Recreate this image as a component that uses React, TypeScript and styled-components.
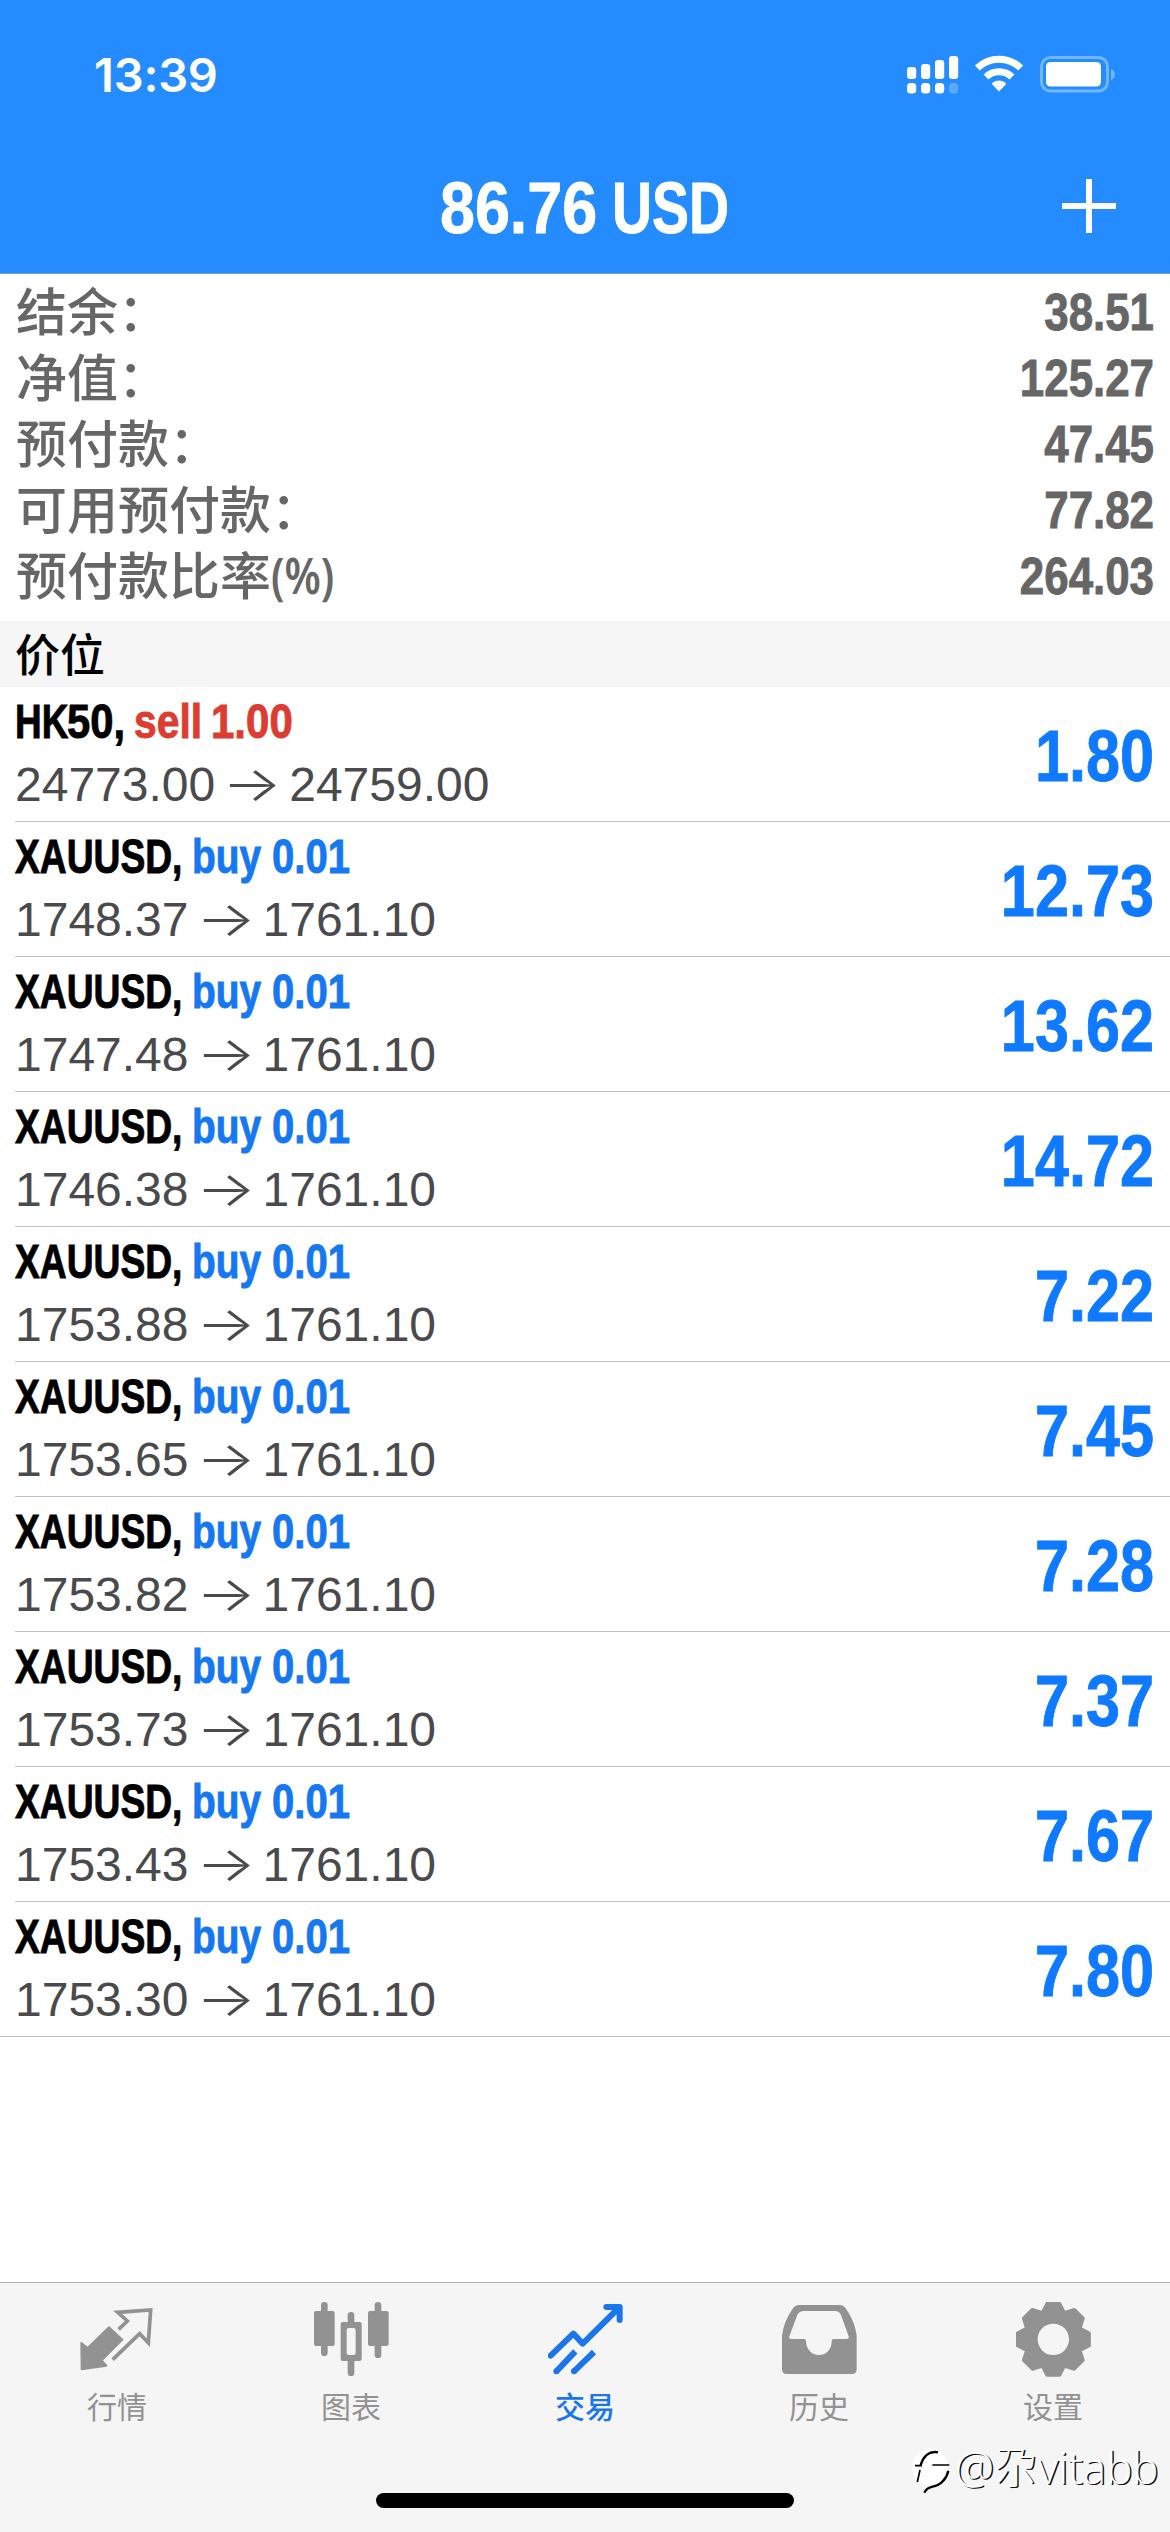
import React from "react";
import styled, { createGlobalStyle } from "styled-components";

const LATIN = `"Liberation Sans", Arial, "Noto Sans CJK SC", sans-serif`;
const CJK = `"Noto Sans CJK SC", "Liberation Sans", sans-serif`;

const Global = createGlobalStyle`
  *, *::before, *::after { box-sizing: border-box; }
  body { margin: 0; background: #fff; }
`;

const Screen = styled.main`
  position: relative;
  display: flex;
  flex-direction: column;
  width: 1170px;
  height: 2532px;
  overflow: hidden;
  background: #fff;
  font-family: ${LATIN};
`;

/* Condensed lettering: the box takes $w pixels, glyphs are squeezed by $s. */
const Condensed = styled.span<{ $w: number; $s: number; $end?: boolean }>`
  display: flex;
  flex: none;
  justify-content: ${(p) => (p.$end ? "flex-end" : "flex-start")};
  width: ${(p) => p.$w}px;
  white-space: pre;
  font-weight: 700;
  -webkit-text-stroke: 0.9px currentColor;
  transform: scaleX(${(p) => p.$s});
  transform-origin: ${(p) => (p.$end ? "right" : "left")} center;
`;

const Header = styled.header`
  display: flex;
  flex-direction: column;
  flex: none;
  height: 274px;
  background: #258cff;
  border-bottom: 1px solid #6f9fce;
  color: #fff;
`;

const StatusBar = styled.div`
  display: flex;
  justify-content: space-between;
  height: 140px;
  padding: 47px 53px 0 94px;
`;

const Clock = styled.time`
  font: 600 47px/56px Inter, sans-serif;
  letter-spacing: -0.2px;
`;

const StatusIcons = styled.svg`
  width: 212px;
  height: 48px;
  margin-top: 3px;
`;

const NavBar = styled.div`
  display: grid;
  grid-template-columns: 1fr 290px 1fr;
  align-items: center;
  height: 134px;
`;

const Title = styled.h1`
  display: flex;
  margin: 0;
  padding-top: 3px;
  font-size: 73px;
  line-height: 84px;
`;

const AddButton = styled.button`
  justify-self: end;
  display: flex;
  width: 56px;
  height: 56px;
  margin-right: 53px;
  padding: 0;
  border: 0;
  background: none;
`;

const Summary = styled.dl`
  display: flex;
  flex-direction: column;
  flex: none;
  height: 347px;
  margin: 0;
  padding: 6px 16px 0;
  color: #666;
`;

const SummaryRow = styled.div`
  display: flex;
  justify-content: space-between;
  height: 66px;
  font-size: 51px;
  line-height: 66px;
`;

const SummaryLabel = styled.dt`
  display: flex;
  height: 58px;
  font-family: ${CJK};
  font-weight: 500;
  line-height: 58px;
`;

const Suffix = styled.span`
  font: 600 50px/62px "Noto Sans", sans-serif;
  transform: scaleX(0.83);
  transform-origin: left center;
`;

const SummaryValue = styled.dd`
  margin: 0;
`;

const SectionTitle = styled.h2`
  flex: none;
  height: 66px;
  margin: 0;
  padding-left: 15px;
  background: #f6f6f6;
  color: #000;
  font: 500 45px/63px ${CJK};
`;

const Positions = styled.ul`
  display: flex;
  flex-direction: column;
  flex: none;
  margin: 0;
  padding: 0;
  list-style: none;
`;

const Position = styled.li`
  display: flex;
  justify-content: space-between;
  height: 135px;
  margin-left: 15px;
  padding-right: 16px;
  border-bottom: 1px solid #c2c2c4;

  &:last-child {
    margin-left: 0;
    padding-left: 15px;
  }
`;

const Details = styled.div`
  display: flex;
  flex-direction: column;
  padding-top: 5px;
`;

const Order = styled.div`
  display: flex;
  height: 60px;
  font-size: 48px;
  line-height: 60px;
`;

const Side = styled.span<{ $sell: boolean }>`
  display: flex;
  color: ${(p) => (p.$sell ? "#dc3d31" : "#1678f0")};
`;

const Prices = styled.div`
  display: flex;
  color: #4a4a4d;
  font-size: 48px;
  line-height: 66px;
`;

const Arrow = styled.span`
  display: flex;
  justify-content: center;
  width: 74px;
  font: 300 48px/64px Inter, sans-serif;
  transform: scaleX(1.31);
`;

const Profit = styled.div`
  display: flex;
  color: #0f7aff;
  font-size: 72px;
  line-height: 139px;
`;

const TabBar = styled.nav`
  display: grid;
  grid-template-columns: repeat(5, 234px);
  flex: none;
  height: 250px;
  margin-top: auto;
  border-top: 1px solid #b0b0b0;
  background: #f5f5f5;
`;

const Tab = styled.a<{ $active?: boolean }>`
  display: flex;
  flex-direction: column;
  align-items: center;
  padding-top: 19px;
  color: ${(p) => (p.$active ? "#1a76ea" : "#929292")};
  font: ${(p) => (p.$active ? 500 : 400)} 30px/40px ${CJK};
`;

const TabIcon = styled.svg`
  width: 75px;
  height: 75px;
  margin-bottom: 8px;
`;

const HomeIndicator = styled.div`
  position: absolute;
  left: 376px;
  bottom: 24px;
  width: 418px;
  height: 15px;
  border-radius: 8px;
  background: #000;
`;

const Watermark = styled.div`
  position: absolute;
  left: 912px;
  top: 2440px;
  display: flex;
  align-items: center;
  height: 54px;
  color: #fff;
  font: 300 44px/54px "Open Sans", "Noto Sans CJK SC", sans-serif;
  text-shadow: 1.5px 1px 0.5px #111;
`;

const WatermarkLogo = styled.svg`
  width: 40px;
  height: 52px;
  margin-right: 3px;
`;

const summary = [
  { label: "结余：", value: "38.51" },
  { label: "净值：", value: "125.27" },
  { label: "预付款：", value: "47.45" },
  { label: "可用预付款：", value: "77.82" },
  { label: "预付款比率", suffix: "(%)", value: "264.03" },
];

const positions = [
  { symbol: "HK50", side: "sell", volume: "1.00", open: "24773.00", now: "24759.00", profit: "1.80" },
  ...[
    ["1748.37", "12.73"],
    ["1747.48", "13.62"],
    ["1746.38", "14.72"],
    ["1753.88", "7.22"],
    ["1753.65", "7.45"],
    ["1753.82", "7.28"],
    ["1753.73", "7.37"],
    ["1753.43", "7.67"],
    ["1753.30", "7.80"],
  ].map(([open, profit]) => ({ symbol: "XAUUSD", side: "buy", volume: "0.01", open, now: "1761.10", profit })),
];

/* One tooth outline, repeated every 45 degrees around the hub. */
const gearPoints = Array.from({ length: 8 }, (_, i) => {
  const a = (i * Math.PI) / 4;
  return [
    [-33, -81],
    [-19, -108],
    [19, -108],
    [33, -81],
  ]
    .map(([x, y]) => `${(112 + x * Math.cos(a) - y * Math.sin(a)).toFixed(1)},${(112 + x * Math.sin(a) + y * Math.cos(a)).toFixed(1)}`)
    .join(" ");
}).join(" ");

const icons = {
  quotes: (
    <>
      <path fill="currentColor" stroke="currentColor" strokeWidth="6" strokeLinejoin="round" d="M4 123 23 138 87 76 127 113 65 175 79 191 5 202Z" />
      <path fill="none" stroke="currentColor" strokeWidth="11" d="M98 173 179 95 205 122 212 24 113 31 142 57 116 82" />
    </>
  ),
  chart: (
    <g fill="currentColor">
      <rect x="0" y="27" width="62" height="105" rx="6" />
      <rect x="21" y="0" width="20" height="162" rx="10" />
      <path fillRule="evenodd" d="M86 60H137Q143 60 143 66V171Q143 177 137 177H86Q80 177 80 171V66Q80 60 86 60ZM105 78Q98 78 98 85V152Q98 159 105 159H118Q125 159 125 152V85Q125 78 118 78Z" />
      <path d="M101 62V40a10 10 0 0 1 20 0V62ZM101 175V212a10 10 0 0 0 20 0V175Z" />
      <rect x="162" y="27" width="62" height="105" rx="6" />
      <rect x="182" y="0" width="20" height="168" rx="10" />
    </g>
  ),
  trade: (
    <g fill="none" stroke="currentColor" strokeWidth="18" strokeLinejoin="round">
      <path strokeLinecap="round" d="M8 161 76 95 104 125 212 18M175 15H215V54" />
      <path d="M25 208 82 148M78 208 138 150" />
      <g fill="currentColor" stroke="none">
        <circle cx="25" cy="208" r="9" />
        <circle cx="78" cy="208" r="9" />
        <path d="M190 15H215V40Z" />
      </g>
    </g>
  ),
  history: (
    <path
      fill="currentColor"
      fillRule="evenodd"
      d="M52 9H172Q186 9 193 22Q218 58 224 100V202Q224 216 210 216H14Q0 216 0 202V100Q6 58 31 22Q38 9 52 9ZM66 27Q52 27 46 39L22 103Q20 111 28 111H66Q72 111 72 118C73 142 88 159 111 159C134 159 149 142 149 118Q149 111 155 111H194Q202 111 200 103L177 39Q172 27 158 27Z"
    />
  ),
  settings: (
    <g>
      <polygon points={gearPoints} fill="currentColor" stroke="currentColor" strokeWidth="9" strokeLinejoin="round" />
      <circle cx="112" cy="112" r="47" fill="#f5f5f5" />
    </g>
  ),
};

const tabs: { label: string; icon: React.ReactNode; active?: boolean }[] = [
  { label: "行情", icon: icons.quotes },
  { label: "图表", icon: icons.chart },
  { label: "交易", icon: icons.trade, active: true },
  { label: "历史", icon: icons.history },
  { label: "设置", icon: icons.settings },
];

function Status() {
  return (
    <StatusIcons viewBox="905 50 212 48" fill="#fff">
      <rect x="907" y="67" width="9.2" height="12" rx="3" />
      <rect x="921" y="64" width="9.2" height="15" rx="3" />
      <rect x="935" y="60" width="9.2" height="19" rx="3" />
      <rect x="949" y="56" width="9.2" height="23" rx="3" />
      <rect x="907" y="83" width="9.2" height="10.5" rx="3.5" />
      <rect x="921" y="83" width="9.2" height="10.5" rx="3.5" />
      <rect x="935" y="83" width="9.2" height="10.5" rx="3.5" />
      <rect x="949" y="83" width="9.2" height="10.5" rx="3.5" opacity="0.25" />
      <path d="M999 91.5 992.3 84.6Q991.6 83.5 992.8 82.6A10 10 0 0 1 1005.2 82.6Q1006.4 83.5 1005.7 84.6Z" />
      <path fill="none" stroke="#fff" strokeWidth="7" d="M977.3 68A31 31 0 0 1 1020.7 68M986 77A18.5 18.5 0 0 1 1012 77" />
      <rect x="1041.5" y="57.5" width="66" height="33.5" rx="9" fill="none" stroke="#72b6ff" strokeWidth="3" />
      <rect x="1046" y="62" width="55" height="24.5" rx="4.5" />
      <path fill="#72b6ff" d="M1111 69Q1115 71 1115 74.5T1111 80Z" />
    </StatusIcons>
  );
}

export default function App() {
  return (
    <Screen>
      <Global />
      <Header>
        <StatusBar>
          <Clock>13:39</Clock>
          <Status />
        </StatusBar>
        <NavBar>
          <span />
          <Title>
            <Condensed $w={172} $s={0.86}>86.76</Condensed>
            <Condensed $w={118} $s={0.76}>USD</Condensed>
          </Title>
          <AddButton aria-label="add">
            <svg viewBox="0 0 56 56" width="56" height="56">
              <path d="M1 28H55M28 1V55" stroke="#fff" strokeWidth="6" />
            </svg>
          </AddButton>
        </NavBar>
      </Header>

      <Summary>
        {summary.map((s) => (
          <SummaryRow key={s.label}>
            <SummaryLabel>
              {s.label}
              {s.suffix && <Suffix>{s.suffix}</Suffix>}
            </SummaryLabel>
            <SummaryValue>
              <Condensed $w={140} $s={0.86} $end>{s.value}</Condensed>
            </SummaryValue>
          </SummaryRow>
        ))}
      </Summary>

      <SectionTitle>价位</SectionTitle>

      <Positions>
        {positions.map((p) => {
          const sell = p.side === "sell";
          return (
            <Position key={p.open}>
              <Details>
                <Order>
                  {sell ? (
                    <>
                      <Condensed $w={52} $s={0.77}>HK</Condensed>
                      <Condensed $w={67} $s={0.87}>50,</Condensed>
                    </>
                  ) : (
                    <Condensed $w={177} $s={0.775}>{p.symbol},</Condensed>
                  )}
                  <Side $sell={sell}>
                    <Condensed $w={sell ? 77 : 80} $s={sell ? 0.85 : 0.81}>{p.side}</Condensed>
                    <Condensed $w={85} $s={sell ? 0.875 : 0.835}>{p.volume}</Condensed>
                  </Side>
                </Order>
                <Prices>
                  <span>{p.open}</span>
                  <Arrow>→</Arrow>
                  <span>{p.now}</span>
                </Prices>
              </Details>
              <Profit>
                <Condensed $w={200} $s={0.85} $end>{p.profit}</Condensed>
              </Profit>
            </Position>
          );
        })}
      </Positions>

      <TabBar>
        {tabs.map((t) => (
          <Tab key={t.label} $active={t.active}>
            <TabIcon viewBox="0 0 225 225">{t.icon}</TabIcon>
            {t.label}
          </Tab>
        ))}
      </TabBar>

      <HomeIndicator />
      <Watermark>
        <WatermarkLogo viewBox="36 33 120 156">
          <circle cx="90" cy="112" r="54" fill="#fff" />
          <g fill="none" stroke="#000">
            <path strokeWidth="7" d="M62 105C70 78 88 62 114 67M145 122C140 146 122 166 98 170C88 172 78 178 73 188" />
            <path strokeWidth="5" d="M45 107H66M97 105H148M60 120 52 156" />
          </g>
        </WatermarkLogo>
        @尕vitabb
      </Watermark>
    </Screen>
  );
}
